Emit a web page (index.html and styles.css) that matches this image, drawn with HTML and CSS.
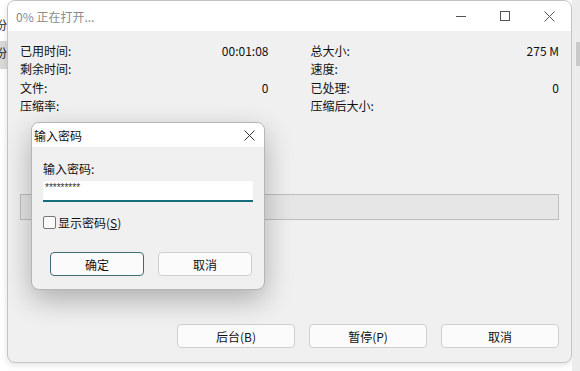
FILE: index.html
```html
<!DOCTYPE html>
<html lang="zh-CN">
<head>
    <meta charset="UTF-8">
    <title>0% 正在打开...</title>
    <link rel="stylesheet" href="styles.css">
</head>
<body>
    <div class="desk">
        <!--后面窗口露出来的一条-->
        <div class="back-left">
            <div class="back-row">备份</div>
            <div class="back-row sel">备份</div>
        </div>

        <div class="win">
            <div class="win-title">
                <span class="win-name">0% 正在打开...</span>
                <div class="win-ctrl">
                    <span class="ctl">
                        <svg width="10" height="10" viewBox="0 0 10 10"><path d="M0 5.5H10" stroke="#555" stroke-width="1"/></svg>
                    </span>
                    <span class="ctl">
                        <svg width="10" height="10" viewBox="0 0 10 10"><rect x="0.5" y="0.5" width="9" height="9" fill="none" stroke="#555" stroke-width="1"/></svg>
                    </span>
                    <span class="ctl">
                        <svg width="11" height="11" viewBox="0 0 11 11"><path d="M0.5 0.5L10.5 10.5M10.5 0.5L0.5 10.5" stroke="#555" stroke-width="1"/></svg>
                    </span>
                </div>
            </div>

            <div class="win-body">
                <div class="stats">
                    <div class="col">
                        <div class="row"><span>已用时间:</span><span>00:01:08</span></div>
                        <div class="row"><span>剩余时间:</span><span></span></div>
                        <div class="row"><span>文件:</span><span>0</span></div>
                        <div class="row"><span>压缩率:</span><span></span></div>
                    </div>
                    <div class="col">
                        <div class="row"><span>总大小:</span><span>275 M</span></div>
                        <div class="row"><span>速度:</span><span></span></div>
                        <div class="row"><span>已处理:</span><span>0</span></div>
                        <div class="row"><span>压缩后大小:</span><span></span></div>
                    </div>
                </div>

                <div class="progress"></div>

                <div class="actions">
                    <button class="btn">后台(B)</button>
                    <button class="btn">暂停(P)</button>
                    <button class="btn">取消</button>
                </div>
            </div>
        </div>

        <div class="back-right"><div class="bar"></div></div>

        <!--密码对话框 盖在上面-->
        <div class="dlg">
            <div class="dlg-title">
                <span>输入密码</span>
                <svg width="11" height="11" viewBox="0 0 11 11"><path d="M0.5 0.5L10.5 10.5M10.5 0.5L0.5 10.5" stroke="#333" stroke-width="1"/></svg>
            </div>
            <div class="dlg-body">
                <div class="dlg-label">输入密码:</div>
                <div class="pwd">*********</div>
                <label class="chk"><span class="box"></span>显示密码(<u>S</u>)</label>
                <div class="dlg-btns">
                    <button class="btn btn-ok">确定</button>
                    <button class="btn">取消</button>
                </div>
            </div>
        </div>
    </div>
</body>
</html>
```

FILE: styles.css
```css
body{
    margin: 0;
    background: #fff;
    font-family: "Noto Sans CJK SC", "Microsoft YaHei", sans-serif;
    font-size: 12px;
    color: #111;
}

.desk{
    position: relative;
    display: flex;
    width: 580px;
    height: 371px;
    overflow: hidden;
    background: #fff;
}

/*左边后面的窗口*/
.back-left{
    width: 7px;
    overflow: hidden;
    padding-top: 16px;
}
.back-row{
    width: 7px;
    height: 25px;
    line-height: 18px;
    direction: rtl;
    white-space: nowrap;
    color: #222;
}
.back-row.sel{
    background: #d9d9d9;
    height: 25px;
    padding-top: 3px;
}

.back-right{
    flex: 1;
    background: #ececec;
    padding-top: 42px;
    display: flex;
    justify-content: flex-end;
}
.back-right .bar{
    width: 4px;
    height: 24px;
    background: #c9c9c9;
}

/*主窗口*/
.win{
    width: 565px;
    height: 363px;
    box-sizing: border-box;
    border: 1px solid #c4c4c4;
    border-radius: 8px;
    overflow: hidden;
    display: flex;
    flex-direction: column;
    background: #f0f0f0;
    box-shadow: 0 2px 6px rgba(0,0,0,0.12);
}
.win-title{
    height: 30px;
    background: #fff;
    display: flex;
    align-items: center;
    justify-content: space-between;
    padding-left: 8px;
}
.win-name{
    color: #8a8a8a;
    font-size: 12px;
}
.win-ctrl{
    display: flex;
    height: 100%;
}
.ctl{
    width: 44px;
    display: flex;
    align-items: center;
    justify-content: center;
}

.win-body{
    flex: 1;
    display: flex;
    flex-direction: column;
    padding: 11px 12px 14px 12px;
}
.stats{
    display: grid;
    grid-template-columns: 1fr 1fr;
    column-gap: 42px;
}
.row{
    display: flex;
    justify-content: space-between;
    height: 18.3px;
    line-height: 18.3px;
}

.progress{
    margin-top: 79px;
    height: 24px;
    background: #e6e6e6;
    border: 1px solid #bdbdbd;
}

.actions{
    margin-top: auto;
    display: flex;
    justify-content: flex-end;
    gap: 14px;
}
.btn{
    font-family: inherit;
    font-size: 12px;
    color: #111;
    background: #fbfbfb;
    border: 1px solid #cfcfcf;
    border-radius: 4px;
    height: 24px;
    padding: 0;
}
.actions .btn{
    width: 118px;
}

/*对话框*/
.dlg{
    position: absolute;
    left: 31px;
    top: 122px;
    width: 234px;
    height: 168px;
    box-sizing: border-box;
    border: 1px solid #b5b5b5;
    border-radius: 8px;
    overflow: hidden;
    background: #f0f0f0;
    box-shadow: 0 10px 28px rgba(0,0,0,0.28);
}
.dlg-title{
    height: 24px;
    background: #fff;
    display: flex;
    align-items: center;
    justify-content: space-between;
    padding: 0 9px 0 2px;
}
.dlg-body{
    padding: 13px 11px 0 11px;
}
.dlg-label{
    line-height: 18px;
}
.pwd{
    margin-top: 3px;
    height: 21px;
    box-sizing: border-box;
    background: #fff;
    border-bottom: 2px solid #176d7b;
    border-radius: 3px 3px 0 0;
    font-family: "Liberation Sans", sans-serif;
    font-size: 10px;
    line-height: 10px;
    padding: 2px 0 0 2px;
    color: #333;
}
.chk{
    display: flex;
    align-items: center;
    margin-top: 12px;
    height: 16px;
}
.box{
    width: 11px;
    height: 11px;
    border: 1px solid #777;
    border-radius: 2px;
    background: #fafafa;
    margin-right: 2px;
}
.dlg-btns{
    display: flex;
    gap: 14px;
    margin-top: 22px;
    padding-left: 7px;
}
.dlg-btns .btn{
    width: 94px;
}
.btn-ok{
    border-color: #3f6d74;
}
```
